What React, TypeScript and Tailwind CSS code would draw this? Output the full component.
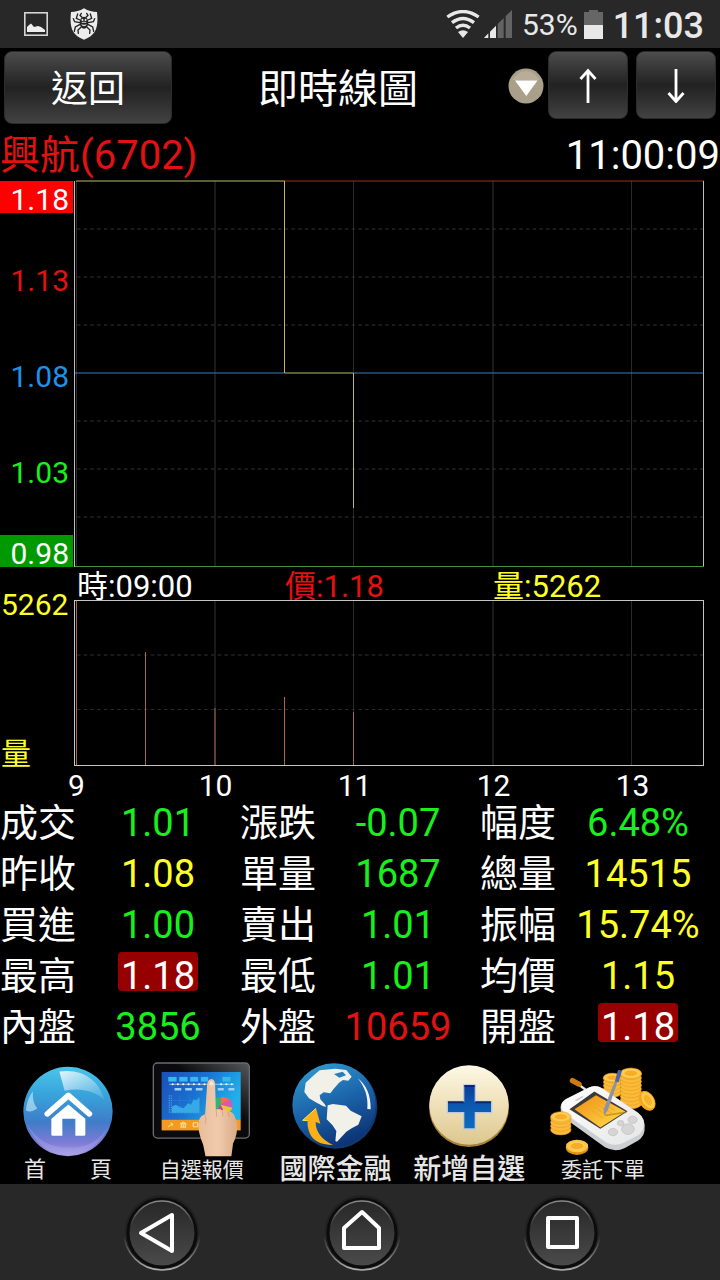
import React from "react";

const glossy =
  "flex items-center justify-center rounded-lg border border-[#2b2b2b] bg-linear-to-b from-[#4d4d4d] via-[#222222] to-[#424242] text-white";

const green = "text-[#18f01c]";
const yellow = "text-[#ffff28]";
const red = "text-[#e01212]";

type Quote = { label: string; value: string; tone: string; boxed?: boolean };

const quotes: Quote[][] = [
  [
    { label: "成交", value: "1.01", tone: green },
    { label: "漲跌", value: "-0.07", tone: green },
    { label: "幅度", value: "6.48%", tone: green },
  ],
  [
    { label: "昨收", value: "1.08", tone: yellow },
    { label: "單量", value: "1687", tone: green },
    { label: "總量", value: "14515", tone: yellow },
  ],
  [
    { label: "買進", value: "1.00", tone: green },
    { label: "賣出", value: "1.01", tone: green },
    { label: "振幅", value: "15.74%", tone: yellow },
  ],
  [
    { label: "最高", value: "1.18", tone: "text-white", boxed: true },
    { label: "最低", value: "1.01", tone: green },
    { label: "均價", value: "1.15", tone: yellow },
  ],
  [
    { label: "內盤", value: "3856", tone: green },
    { label: "外盤", value: "10659", tone: red },
    { label: "開盤", value: "1.18", tone: "text-white", boxed: true },
  ],
];

function StatusBar() {
  return (
    <div className="flex h-12 items-center bg-[#282828] pr-4 pl-6 text-[#e8e8e8]">
      <svg className="h-6 w-6" viewBox="0 0 24 24" aria-hidden="true">
        <rect x="0.8" y="0.8" width="22.4" height="22.4" fill="none" stroke="#d4d4d4" strokeWidth="1.6" />
        <path d="M3 20v-5l2-2 2-1.500 3 3.500 4-1 3 1 4 3v2z" fill="#eee" />
      </svg>
      <svg className="ml-[22px] h-8 w-7" viewBox="0 0 84 96" aria-hidden="true">
        <path d="M42 1C30 9 16 12 3 12C-1 50 2 82 42 95C82 82 85 50 81 12C68 12 54 9 42 1Z" fill="#ececec" />
        <g fill="none" stroke="#222" strokeWidth="4" strokeLinecap="round">
          <path d="M30 36L19 31L23 18M54 36L65 31L61 18M30 44L14 41L10 32M54 44L70 41L74 32M29 50L16 57L13 70M55 50L68 57L71 70M33 58L24 66L25 76M51 58L60 66L59 76" />
          <path d="M36 28L30 22L34 16M48 28L54 22L50 16" />
        </g>
        <ellipse cx="42" cy="44" rx="13" ry="18" fill="#222" />
        <path d="M36 33l4 3-4 2zM48 33l-4 3 4 2zM35 43h14M35 50c5 4 9 4 14 0" fill="#eee" stroke="#eee" strokeWidth="2.5" />
      </svg>
      <div className="ml-auto flex items-center">
        <svg className="h-7 w-[34px]" viewBox="0 0 102 84" aria-hidden="true">
          <g fill="none" stroke="#e8e8e8" strokeWidth="10">
            <path d="M4 21Q51 -12 98 21" />
            <path d="M18 38Q51 13 84 38" />
            <path d="M30 54Q51 37 72 54" />
          </g>
          <path d="M36 66Q51 55 66 66L51 84Z" fill="#e8e8e8" />
        </svg>
        <svg className="ml-1 h-7 w-7" viewBox="0 0 84 84" aria-hidden="true">
          <path d="M0 84L13 70V84ZM18 84V65L36 47V84Z" fill="#e8e8e8" />
          <path d="M41 84V42L59 24V84ZM65 84V18L84 0V84Z" fill="#636363" />
        </svg>
        <span className="ml-[10px] pt-0.5 text-[30px] leading-[48px]">53%</span>
        <svg className="ml-[6px] h-[29px] w-[19px]" viewBox="0 0 19 29" aria-hidden="true">
          <path d="M5 0h9v2h5v13H0V2h5z" fill="#666" />
          <path d="M0 15h19v14H0z" fill="#e8e8e8" />
        </svg>
        <span className="ml-[10px] pt-[3px] text-[36px] leading-[48px] font-medium">11:03</span>
      </div>
    </div>
  );
}

function Header() {
  return (
    <header className="flex h-20 items-start px-1 pt-[3px]">
      <button className={`${glossy} h-[73px] w-[168px] pt-1 text-[37px]`}>返回</button>
      <h1 className="flex-1 pr-1 text-center text-[40px] leading-[78px]">即時線圖</h1>
      <button aria-label="選單" className="mt-[17px] h-9 w-9">
        <svg viewBox="0 0 36 36" aria-hidden="true">
          <circle cx="18" cy="18" r="17.5" fill="#aaa089" />
          <path d="M4 12Q18 -6 32 12" fill="#b7ad98" />
          <path d="M7 12.5H29.500L18.300 28Z" fill="#fff" />
        </svg>
      </button>
      <button aria-label="上一檔" className={`${glossy} ml-1 h-[68px] w-20`}>
        <svg className="h-9 w-[18px]" viewBox="0 0 18 36" aria-hidden="true">
          <path d="M9 36V4M1.500 12L9 3.500L16.500 12" fill="none" stroke="#fff" strokeWidth="2.8" />
        </svg>
      </button>
      <button aria-label="下一檔" className={`${glossy} ml-2 h-[68px] w-20`}>
        <svg className="h-9 w-[18px]" viewBox="0 0 18 36" aria-hidden="true">
          <path d="M9 2V34M1.500 26L9 34.500L16.500 26" fill="none" stroke="#fff" strokeWidth="2.8" />
        </svg>
      </button>
    </header>
  );
}

function PriceChart() {
  return (
    <section className="flex pr-4 text-[30px]">
      <div className="flex w-[74px] shrink-0 flex-col pr-px text-right">
        <div className="h-[53px] pt-px">
          <div className="h-8 bg-[#ff0000] pr-1 leading-[38px] text-white">1.18</div>
        </div>
        <div className={`h-24 pr-1 leading-[96px] ${red}`}>1.13</div>
        <div className="h-24 pr-1 leading-[96px] text-[#1c93e8]">1.08</div>
        <div className={`h-24 pr-1 leading-[96px] ${green}`}>1.03</div>
        <div className="flex h-[46px] flex-col justify-end">
          <div className="h-8 bg-[#009a00] pr-1 leading-[38px] text-white">0.98</div>
        </div>
      </div>
      <svg className="h-[387px] min-w-0 flex-1" viewBox="74 180 630 387" preserveAspectRatio="none" role="img" aria-label="價">
        <path d="M76.500 181V566M353.500 181V566M631.500 181V566" stroke="#2a2a2a" />
        <path d="M215 181V566M493 181V566" stroke="#333" />
        <path
          d="M77 229H703M77 277H703M77 325H703M77 421H703M77 469H703M77 517H703"
          stroke="#333"
          strokeDasharray="3.500 3.200"
        />
        <path d="M284 181H704" stroke="#a82a22" />
        <path d="M75 373H284M354 373H704" stroke="#3f7cc0" />
        <path d="M74.500 181V567M703.500 181V567" stroke="#bdbdbd" />
        <path d="M75 566.500H704" stroke="#4a8f4a" />
        <path d="M76 181H284.500V373H353.500V508" fill="none" stroke="#b8b870" />
      </svg>
    </section>
  );
}

function VolumeChart() {
  const bars = [
    { x: 76.5, top: 601 },
    { x: 145.5, top: 652 },
    { x: 215, top: 708 },
    { x: 284.5, top: 697 },
    { x: 353.5, top: 712 },
  ];
  return (
    <section className="text-[30px]">
      <div className="flex pr-4">
        <div className={`flex w-[74px] shrink-0 flex-col justify-between pt-5 pl-px ${yellow}`}>
          <span className="leading-9">5262</span>
          <span className="leading-6">量</span>
        </div>
        <div className="flex min-w-0 flex-1 flex-col">
          <div className="grid h-[33px] grid-cols-3 pr-[3px] pl-[3px] text-[31px] leading-[39px]">
            <span>時:09:00</span>
            <span className={red}>價:1.18</span>
            <span className={yellow}>量:5262</span>
          </div>
          <svg className="h-[166px] w-full" viewBox="74 600 630 166" preserveAspectRatio="none" role="img" aria-label="量">
            <path d="M353.500 601V765M631.500 601V765" stroke="#2a2a2a" />
            <path d="M215 601V765M493 601V765" stroke="#333" />
            <path d="M77 655H703" stroke="#333" strokeDasharray="3.500 3.200" />
            <path d="M77 709.500H703" stroke="#2a2a2a" strokeDasharray="3.500 3.200" />
            {bars.map((b) => (
              <path key={b.x} d={`M${b.x} ${b.top}V765`} stroke="#a5694c" />
            ))}
            <rect x="74.5" y="600.5" width="629" height="165" fill="none" stroke="#c4c4c4" />
          </svg>
        </div>
      </div>
      <div className="mr-[18px] ml-[7px] grid h-8 grid-cols-5 text-center leading-[39px]">
        {[9, 10, 11, 12, 13].map((h) => (
          <span key={h}>{h}</span>
        ))}
      </div>
    </section>
  );
}

function QuoteTable() {
  return (
    <table className="w-full table-fixed border-collapse text-[38px] leading-[51px]">
      <colgroup>
        {[0, 1, 2].map((i) => (
          <React.Fragment key={i}>
            <col className="w-[76px]" />
            <col />
          </React.Fragment>
        ))}
      </colgroup>
      <tbody>
        {quotes.map((row) => (
          <tr key={row[0].label} className="h-[51px]">
            {row.map((q) => (
              <React.Fragment key={q.label}>
                <th scope="row" className="p-0 text-left align-top font-normal whitespace-nowrap">
                  {q.label}
                </th>
                <td className={`p-0 text-center align-top ${q.tone}`}>
                  {q.boxed ? (
                    <div className="mx-auto mt-px h-[39px] w-20 rounded-sm bg-[#960000] leading-[49px]">{q.value}</div>
                  ) : (
                    q.value
                  )}
                </td>
              </React.Fragment>
            ))}
          </tr>
        ))}
      </tbody>
    </table>
  );
}

function HomeOrb() {
  return (
    <svg className="mt-[3px] h-[91px] w-[90px]" viewBox="71 32 270 272" aria-hidden="true">
      <defs>
        <linearGradient id="orb" x1="0" y1="0" x2="0" y2="1">
          <stop offset="0" stopColor="#4cc4ea" />
          <stop offset="0.3" stopColor="#38a5dc" />
          <stop offset="0.62" stopColor="#3f7cc8" />
          <stop offset="0.85" stopColor="#7e7bd6" />
          <stop offset="1" stopColor="#a79be4" />
        </linearGradient>
        <linearGradient id="shine" x1="0" y1="0" x2="1" y2="1">
          <stop offset="0" stopColor="#fff" stopOpacity="0.85" />
          <stop offset="1" stopColor="#bfe6f8" stopOpacity="0.15" />
        </linearGradient>
      </defs>
      <circle cx="206" cy="168" r="134" fill="url(#orb)" />
      <path d="M180 48C250 38 300 75 315 132C285 105 240 96 196 106Z" fill="url(#shine)" />
      <path d="M80 165C82 140 90 120 101 108C99 130 104 148 114 158C100 168 90 170 80 165Z" fill="#cfeefb" opacity="0.6" />
      <path d="M83 205C110 275 165 300 206 299C260 298 305 265 326 214C300 262 255 278 206 276C150 276 108 252 83 205Z" fill="#b5b5f0" opacity="0.3" />
      <path d="M144 175L207 120L270 175" fill="none" stroke="#fff" strokeWidth="17" strokeLinecap="round" strokeLinejoin="round" />
      <path d="M156 190L207 147L258 190V237Q258 241 254 241H228V190H189V241H160Q156 241 156 237Z" fill="#fff" />
    </svg>
  );
}

function TabletIcon() {
  return (
    <svg className="h-[97px] w-[99px]" viewBox="456 22 298 290" aria-hidden="true">
      <defs>
        <linearGradient id="screen" x1="0" y1="0" x2="1" y2="0.4">
          <stop offset="0" stopColor="#1c4fb8" />
          <stop offset="0.5" stopColor="#1a6fd0" />
          <stop offset="1" stopColor="#22b0e8" />
        </linearGradient>
        <linearGradient id="skin" x1="0" y1="0" x2="1" y2="0">
          <stop offset="0" stopColor="#e9bd9a" />
          <stop offset="0.5" stopColor="#efcbab" />
          <stop offset="1" stopColor="#d9aa88" />
        </linearGradient>
        <linearGradient id="frame" x1="0" y1="1" x2="1" y2="0">
          <stop offset="0.6" stopColor="#0b0b0d" />
          <stop offset="1" stopColor="#55585c" />
        </linearGradient>
      </defs>
      <rect x="460" y="27" width="289" height="226" rx="12" fill="url(#frame)" stroke="#6a6d70" strokeWidth="4" />
      <rect x="485" y="54" width="238" height="145" fill="url(#screen)" />
      <rect x="485" y="198" width="238" height="32" fill="#f39a22" />
      <g fill="#36b9ee">
        <rect x="505" y="69" width="25" height="14" />
        <rect x="538" y="69" width="25" height="14" />
        <rect x="571" y="69" width="24" height="14" />
        <rect x="603" y="69" width="22" height="14" />
        <rect x="668" y="69" width="24" height="14" />
      </g>
      <path d="M508 91H702" stroke="#d8efff" strokeWidth="2" />
      <g fill="#fff">
        {[518, 534, 550, 566, 582, 598, 614, 664, 680, 696].map((x) => (
          <circle key={x} cx={x} cy="91" r="3" />
        ))}
      </g>
      <path d="M524 106h20M556 106h20M588 106h20M654 106h18M686 106h18" stroke="#9fd0f5" strokeWidth="8" />
      <path d="M514 124V177H602M508 124V177" fill="none" stroke="#79c3ef" strokeWidth="2" strokeDasharray="4 3" />
      <path d="M516 140H600M516 158H600M540 124V176M570 124V176" stroke="#2a86d8" strokeWidth="1.5" />
      <path d="M516 177V158L528 153L540 160L552 163L564 148L573 153L582 136L588 140L599 130V177Z" fill="#37a9e6" />
      <path d="M662 153L664 130A27 27 0 0 1 690 138Z" fill="#f56d4e" />
      <path d="M662 153L690 136A32 32 0 0 1 698 160Z" fill="#e252b4" />
      <path d="M662 153L698 162A30 30 0 0 1 676 180Z" fill="#f3c12f" />
      <path d="M662 153L676 180L645 177Z" fill="#cc3f92" />
      <path d="M662 153L645 177V135L664 130Z" fill="#32b768" />
      <path d="M504 220l12-10m-4-3l6 3-2 7M541 220h18M541 210l9-5 9 5zM544 211v8M550 211v8M556 211v8M580 207h14v12h-14z" fill="none" stroke="#ffe7a6" strokeWidth="3" />
      <path d="M622 92Q624 76 635 75Q645 76 646 91L648 168Q659 162 666 169Q674 165 684 173Q695 171 702 181L713 207Q714 243 700 269L695 308H617L610 273Q592 232 597 201Q601 185 616 181Z" fill="url(#skin)" />
      <path d="M649 168L651 190M667 170L670 187M685 174L689 190M616 184Q620 197 617 210" fill="none" stroke="#c9977a" strokeWidth="2" />
      <path d="M629 87Q635 79 641 87V94H629Z" fill="#fbe4d3" />
    </svg>
  );
}

function GlobeIcon() {
  return (
    <svg className="mb-2 h-[88px] w-[88px]" viewBox="80 22 264 264" aria-hidden="true">
      <defs>
        <linearGradient id="sea" x1="0.2" y1="0" x2="0.6" y2="1">
          <stop offset="0" stopColor="#2f9ad0" />
          <stop offset="0.5" stopColor="#1c64aa" />
          <stop offset="1" stopColor="#0c3275" />
        </linearGradient>
      </defs>
      <circle cx="213" cy="156" r="126" fill="#12386f" />
      <circle cx="209" cy="151" r="125" fill="url(#sea)" />
      <path d="M120 112L124 84L150 60L166 47L213 42L246 46L262 66L252 78L236 76L224 84L207 104L198 116L178 113L166 122L168 134L180 147L186 156L177 155L157 144L134 131Z" fill="#f1f1ea" />
      <path d="M209 58L235 51L245 62L225 69Z" fill="#2680bc" />
      <path d="M190 152L206 148L245 153L259 168L292 185L282 210L262 221L246 231L218 261L213 259L216 229L204 211L187 194Z" fill="#f1f1ea" />
      <path d="M280 70C305 90 320 120 319 164L309 163C312 126 302 98 280 70Z" fill="#f3f7fa" />
      <path d="M155 161L168 207L154 202Q154 246 206 271Q150 270 136 235Q128 215 130 198L115 197Z" fill="#fbb116" />
      <path d="M155 161L115 197L130 198" fill="none" stroke="#f6e94c" strokeWidth="3" />
    </svg>
  );
}

function PlusIcon() {
  return (
    <svg className="mb-2 h-[84px] w-[82px]" viewBox="489 26 246 252" aria-hidden="true">
      <defs>
        <linearGradient id="cream" x1="0" y1="0" x2="0" y2="1">
          <stop offset="0" stopColor="#fdf8e6" />
          <stop offset="0.5" stopColor="#efe0b8" />
          <stop offset="1" stopColor="#dcc78e" />
        </linearGradient>
        <linearGradient id="cross" x1="0" y1="0" x2="0" y2="1">
          <stop offset="0" stopColor="#0c3c96" />
          <stop offset="0.4" stopColor="#0b56ae" />
          <stop offset="1" stopColor="#0d6cc0" />
        </linearGradient>
      </defs>
      <circle cx="612" cy="155" r="120" fill="#a58336" />
      <circle cx="612" cy="149" r="119" fill="url(#cream)" />
      <path d="M596 89H631V138H680V172H631V221H596V172H547V138H596Z" fill="url(#cross)" stroke="#b8c9e2" strokeWidth="4" />
      <path d="M598 92H629M549 141H596M631 141H678" stroke="#10217a" strokeWidth="6" />
    </svg>
  );
}

function CoinStack({ x, top, bottom, r }: { x: number; top: number; bottom: number; r: number }) {
  const levels: number[] = [];
  for (let y = bottom; y > top; y -= 11) levels.push(y);
  return (
    <g stroke="#e3941c" strokeWidth="1.500">
      {levels.map((y) => (
        <ellipse key={y} cx={x} cy={y} rx={r} ry={r * 0.5} fill="#fbbb38" />
      ))}
      <ellipse cx={x} cy={top} rx={r} ry={r * 0.5} fill="#fdc94a" />
      <ellipse cx={x} cy={top} rx={r * 0.65} ry={r * 0.3} fill="#f7ae24" stroke="#ffe08a" />
    </g>
  );
}

function OrderIcon() {
  return (
    <svg className="mt-[3px] h-[89px] w-[108px]" viewBox="82 34 324 268" aria-hidden="true">
      <defs>
        <linearGradient id="pda" x1="0" y1="0" x2="1" y2="1">
          <stop offset="0" stopColor="#ffffff" />
          <stop offset="1" stopColor="#e6e6e6" />
        </linearGradient>
        <linearGradient id="note" x1="0" y1="0" x2="1" y2="1">
          <stop offset="0" stopColor="#f08c14" />
          <stop offset="1" stopColor="#ffe04a" />
        </linearGradient>
      </defs>
      <CoinStack x={272} top={66} bottom={112} r={27} />
      <CoinStack x={328} top={53} bottom={144} r={32} />
      <g transform="rotate(58 376 136)">
        <ellipse cx="376" cy="136" rx="32" ry="22" fill="#f6a91f" />
        <ellipse cx="376" cy="132" rx="29" ry="18" fill="#fdc94a" stroke="#e59a18" strokeWidth="2" />
        <ellipse cx="376" cy="132" rx="17" ry="10" fill="#f7b22d" />
      </g>
      <path d="M172 88L194 104" stroke="#e5e5e5" strokeWidth="7" />
      <path d="M152 75L172 86" stroke="#d07a14" strokeWidth="16" strokeLinecap="round" />
      <path d="M117 165Q112 145 130 132L202 96Q222 86 242 98L350 172Q374 190 369 226Q366 245 350 255L310 278Q280 292 250 276L135 193Q119 182 117 165Z" fill="#cdced0" />
      <path d="M119 156Q116 142 132 131L202 96Q222 87 242 99L350 173Q372 190 366 216Q362 232 347 241L306 262Q280 275 254 261L135 178Q121 168 119 156Z" fill="url(#pda)" />
      <path d="M143 161L218 108L318 167L236 220Z" fill="#3b3a38" />
      <path d="M158 161L223 119L312 168L236 216Z" fill="url(#note)" />
      <path d="M187 150L245 188M198 143L258 180M209 136L270 173M220 130L280 165" stroke="#f3a52a" strokeWidth="3" />
      <path d="M163 134L182 124" stroke="#ccc" strokeWidth="5" strokeLinecap="round" />
      <g fill="#d5d5d5" stroke="#bdbdbd" strokeWidth="2">
        <ellipse cx="319" cy="221" rx="19" ry="16" />
        <ellipse cx="333" cy="193" rx="14" ry="11" />
        <ellipse cx="297" cy="203" rx="10" ry="8" />
        <ellipse cx="274" cy="230" rx="14" ry="11" />
      </g>
      <path d="M250 180L315 170" stroke="#a37a18" strokeWidth="5" opacity="0.6" />
      <path d="M293 44L299 47L258 165L247 181L246 161Z" fill="#8b93a4" />
      <path d="M289 43L301 46L291 80L280 77Z" fill="#4b66a8" />
      <CoinStack x={117} top={184} bottom={223} r={31} />
      <ellipse cx="166" cy="277" rx="34" ry="22" fill="#dd9115" />
      <ellipse cx="166" cy="272" rx="33" ry="19" fill="#fdc646" />
      <ellipse cx="166" cy="272" rx="21" ry="11" fill="#f7ae24" stroke="#ffe08a" strokeWidth="2" />
    </svg>
  );
}

function MenuBar() {
  const items = [
    { label: "首　　頁", icon: <HomeOrb />, size: "text-[22px]" },
    { label: "自選報價", icon: <TabletIcon />, size: "text-[21px]" },
    { label: "國際金融", icon: <GlobeIcon />, size: "text-[28px] font-medium" },
    { label: "新增自選", icon: <PlusIcon />, size: "text-[28px] font-medium" },
    { label: "委託下單", icon: <OrderIcon />, size: "text-[21px]" },
  ];
  return (
    <nav className="grid h-[131px] grid-cols-5 pt-2 pr-[50px] pl-px">
      {items.map((it) => (
        <a key={it.label} href="#" className="flex flex-col items-center text-[#e6e6e6]">
          <span className="flex h-[97px] items-center">{it.icon}</span>
          <span className={`leading-[24px] whitespace-pre ${it.size}`}>{it.label}</span>
        </a>
      ))}
    </nav>
  );
}

function SystemNav() {
  const keys = [
    { label: "Back", d: "M41 37L72 19V55Z" },
    { label: "Home", d: "M44 32L62 16L79 32V52H44Z" },
    { label: "Recent", d: "M48 22H77V51H48Z" },
  ];
  return (
    <div className="grid h-24 grid-cols-3 bg-[#282828] pr-[58px] pl-[62px]">
      {keys.map((k) => (
        <button key={k.label} aria-label={k.label} className="flex items-center justify-center">
          <svg className="h-20 w-20" viewBox="0 0 80 80" aria-hidden="true">
            <defs>
              <linearGradient id={`key-${k.label}`} x1="0" y1="0" x2="0" y2="1">
                <stop offset="0" stopColor="#262626" />
                <stop offset="1" stopColor="#4b4b4b" />
              </linearGradient>
              <linearGradient id={`rim-${k.label}`} x1="0" y1="0" x2="0" y2="1">
                <stop offset="0.55" stopColor="#aaa" stopOpacity="0" />
                <stop offset="1" stopColor="#b0b0b0" />
              </linearGradient>
              <linearGradient id={`lip-${k.label}`} x1="0" y1="0" x2="0" y2="1">
                <stop offset="0" stopColor="#888" />
                <stop offset="0.4" stopColor="#888" stopOpacity="0" />
              </linearGradient>
            </defs>
            <circle cx="40" cy="40" r="37" fill="#202020" />
            <circle cx="40" cy="40" r="38" fill="none" stroke={`url(#rim-${k.label})`} strokeWidth="1.500" />
            <circle cx="40" cy="41" r="34" fill={`url(#key-${k.label})`} stroke="#0c0c0c" strokeWidth="3" />
            <circle cx="40" cy="41" r="32" fill="none" stroke={`url(#lip-${k.label})`} strokeWidth="1.500" />
            <g transform="translate(-22 4)">
              <path d={k.d} fill="none" stroke="#fff" strokeWidth="4" strokeLinejoin="round" />
            </g>
          </svg>
        </button>
      ))}
    </div>
  );
}

export default function App() {
  return (
    <div className="flex min-h-screen flex-col bg-black font-['Roboto','Noto_Sans_CJK_TC',sans-serif] text-white">
      <StatusBar />
      <Header />
      <div className="flex h-[52px] justify-between text-[40px] leading-[56px]">
        <span className={red}>興航(6702)</span>
        <time>11:00:09</time>
      </div>
      <PriceChart />
      <VolumeChart />
      <QuoteTable />
      <MenuBar />
      <SystemNav />
    </div>
  );
}
